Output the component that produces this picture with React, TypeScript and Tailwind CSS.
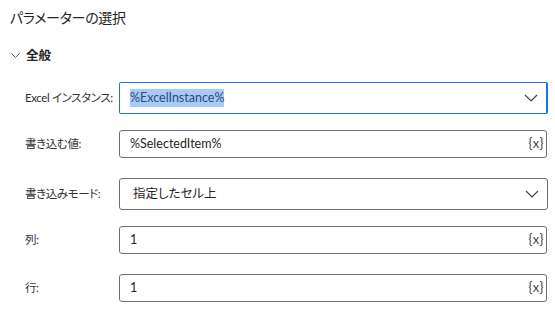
import React from "react";

const font = "font-['Segoe_UI','Lato','Noto_Sans_CJK_JP',sans-serif]";

function Chevron() {
  return (
    <svg width="14" height="8" viewBox="0 0 14 8" fill="none">
      <path d="M1 1l6 6 6-6" stroke="#424242" strokeWidth="1.2" />
    </svg>
  );
}

function Label({ children }: { children: React.ReactNode }) {
  return (
    <div className="w-[109px] shrink-0 pl-[15px] text-[11.5px] text-[#323130] [font-feature-settings:'palt'] tracking-[-0.4px] whitespace-nowrap">
      {children}
    </div>
  );
}

function VarIcon() {
  return <span className="text-[13px] leading-none text-[#424242] tracking-[0.5px] pb-[2px]">{"{x}"}</span>;
}

export default function App() {
  return (
    <div className={`${font} w-[555px] h-[309px] bg-white pl-[10px] overflow-hidden`}>
      <div className="pt-[6px] h-[32px] text-[14px] leading-[24px] text-[#242424] [font-feature-settings:'palt'] tracking-[-0.3px]">
        パラメーターの選択
      </div>
      <div className="mt-[12px] flex items-center h-[24px]">
        <svg width="9" height="6" viewBox="0 0 9 6" fill="none" className="ml-[1px]">
          <path d="M0.5 0.5l4 4 4-4" stroke="#616161" strokeWidth="1" />
        </svg>
        <span className="ml-[6px] text-[12.5px] font-semibold text-[#242424]">全般</span>
      </div>

      <div className="flex flex-col mr-[7px]">
        <div className="flex items-center mt-[14px]">
          <Label>Excel インスタンス:</Label>
          <div className="flex-1 h-[32px] border border-[#1a73e8] border-r-2 rounded-[2px] flex items-center pl-[10px] pr-[8px]">
            <span className="text-[12.5px] text-[#2b4a7a] bg-[#a6cbf7]">%ExcelInstance%</span>
            <div className="ml-auto">
              <Chevron />
            </div>
          </div>
        </div>

        <div className="flex items-center mt-[16px]">
          <Label>書き込む値:</Label>
          <div className="flex-1 h-[28px] border border-[#6e6e6e] rounded-[3px] flex items-center pl-[10px] pr-[2px] mr-[1px]">
            <span className="text-[12.5px] text-[#242424]">%SelectedItem%</span>
            <div className="ml-auto flex items-center"><VarIcon /></div>
          </div>
        </div>

        <div className="flex items-center mt-[20px]">
          <Label>書き込みモード:</Label>
          <div className="flex-1 h-[32px] border border-[#6e6e6e] rounded-[3px] flex items-center pl-[13px] pr-[8px]">
            <span className="text-[12.5px] text-[#242424] [font-feature-settings:'palt']">指定したセル上</span>
            <div className="ml-auto">
              <Chevron />
            </div>
          </div>
        </div>

        <div className="flex items-center mt-[16px]">
          <Label>列:</Label>
          <div className="flex-1 h-[28px] border border-[#6e6e6e] rounded-[3px] flex items-center pl-[10px] pr-[2px] mr-[1px]">
            <span className="text-[12.5px] text-[#242424]">1</span>
            <div className="ml-auto flex items-center"><VarIcon /></div>
          </div>
        </div>

        <div className="flex items-center mt-[20px]">
          <Label>行:</Label>
          <div className="flex-1 h-[28px] border border-[#6e6e6e] rounded-[3px] flex items-center pl-[10px] pr-[2px] mr-[1px]">
            <span className="text-[12.5px] text-[#242424]">1</span>
            <div className="ml-auto flex items-center"><VarIcon /></div>
          </div>
        </div>
      </div>
    </div>
  );
}
